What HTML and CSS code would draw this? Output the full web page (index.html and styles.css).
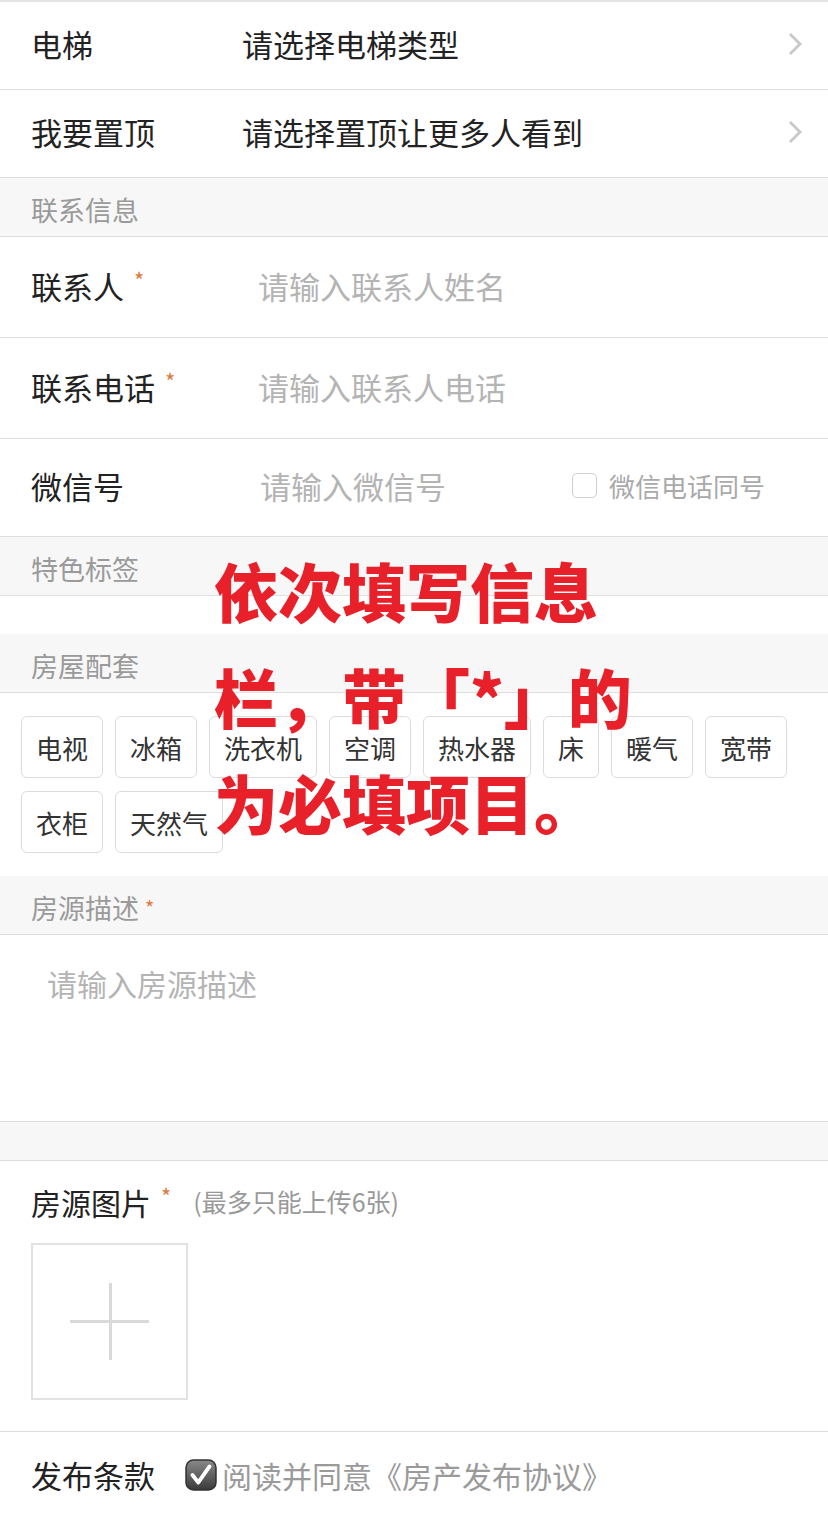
FILE: index.html
```html
<!DOCTYPE html>
<html lang="zh-CN">
<head>
  <meta charset="UTF-8" />
  <meta name="viewport" content="width=device-width, initial-scale=1.0" />
  <title>发布房源</title>
  <link rel="stylesheet" href="styles.css">
</head>
<body>
  <div class="page">
    <div class="form">
      <div class="row row-select">
        <span class="label">电梯</span>
        <span class="value">请选择电梯类型</span>
        <svg class="chevron" viewBox="0 0 14 24"><polyline points="2,2 12,12 2,22" /></svg>
      </div>
      <div class="row row-select">
        <span class="label">我要置顶</span>
        <span class="value">请选择置顶让更多人看到</span>
        <svg class="chevron" viewBox="0 0 14 24"><polyline points="2,2 12,12 2,22" /></svg>
      </div>

      <div class="section-title">联系信息</div>
      <div class="row row-input">
        <span class="label">联系人<i class="req">*</i></span>
        <span class="placeholder">请输入联系人姓名</span>
      </div>
      <div class="row row-input">
        <span class="label">联系电话<i class="req">*</i></span>
        <span class="placeholder">请输入联系人电话</span>
      </div>
      <div class="row row-input row-wechat">
        <span class="label">微信号</span>
        <span class="placeholder">请输入微信号</span>
        <span class="same-phone"><span class="check-box"></span>微信电话同号</span>
      </div>

      <div class="section-title">特色标签</div>
      <div class="tag-empty"></div>

      <div class="section-title">房屋配套</div>
      <div class="tags">
        <span class="tag">电视</span>
        <span class="tag">冰箱</span>
        <span class="tag">洗衣机</span>
        <span class="tag">空调</span>
        <span class="tag">热水器</span>
        <span class="tag">床</span>
        <span class="tag">暖气</span>
        <span class="tag">宽带</span>
        <span class="tag">衣柜</span>
        <span class="tag">天然气</span>
      </div>

      <div class="section-title">房源描述<i class="req">*</i></div>
      <div class="desc">请输入房源描述</div>
      <div class="gap"></div>

      <div class="photos">
        <div class="photos-head">
          <span class="photos-label">房源图片<i class="req">*</i></span>
          <span class="hint">(最多只能上传6张)</span>
        </div>
        <div class="upload"></div>
      </div>

      <div class="row terms">
        <span class="label">发布条款</span>
        <svg class="agree-box" viewBox="0 0 30 30">
          <defs>
            <linearGradient id="boxFill" x1="0" y1="0" x2="0" y2="1">
              <stop offset="0" stop-color="#8a8a8a" />
              <stop offset="1" stop-color="#3a3a3a" />
            </linearGradient>
          </defs>
          <rect x="1" y="1" width="28" height="28" rx="7" fill="url(#boxFill)" stroke="#333" stroke-width="1.5" />
          <polyline points="7,15 12.5,22 23,7" fill="none" stroke="#fff" stroke-width="3.6" stroke-linecap="round" stroke-linejoin="round" />
        </svg>
        <span class="agree-text">阅读并同意《房产发布协议》</span>
      </div>
    </div>

    <div class="tip">依次填写信息<br>栏，带「*」的<br>为必填项目。</div>
  </div>
</body>
</html>
```

FILE: styles.css
```css
* {
  box-sizing: border-box;
  margin: 0;
  padding: 0;
}

body {
  background: #fff;
  font-family: "Noto Sans CJK SC", "Noto Sans", sans-serif;
  color: #222;
}

.page {
  position: relative;
  width: 828px;
  min-height: 1522px;
  overflow: hidden;
}

.form {
  border-top: 2px solid #e4e4e4;
}

.row {
  display: flex;
  align-items: center;
  border-bottom: 1px solid #dedede;
  padding-left: 31px;
  padding-bottom: 4px;
  font-size: 31px;
}

.row-select {
  height: 88px;
}

.row-select .label {
  width: 211px;
}

.row-select .value {
  flex: 1;
}

.chevron {
  width: 14px;
  height: 24px;
  margin-right: 26px;
}

.chevron polyline {
  fill: none;
  stroke: #c8c8c8;
  stroke-width: 2.8;
}

.row-input {
  height: 101px;
}

.row-input .label {
  width: 227px;
}

.row-wechat {
  height: 98px;
}

.row-wechat .label {
  width: 229px;
}

.placeholder {
  flex: 1;
  color: #b4b4b4;
}

.req {
  font-style: normal;
  color: #e07a3c;
  font-size: 22px;
  vertical-align: 10px;
  margin-left: 10px;
}

.same-phone {
  display: flex;
  align-items: center;
  font-size: 26px;
  color: #aaa;
  margin-right: 63px;
}

.check-box {
  width: 25px;
  height: 25px;
  border: 1.5px solid #cfcfcf;
  border-radius: 5px;
  margin-right: 12px;
}

.section-title {
  height: 59px;
  display: flex;
  align-items: center;
  padding: 5px 0 0 31px;
  background: #f7f7f7;
  border-bottom: 1px solid #dedede;
  font-size: 27px;
  color: #9a9a9a;
}

.section-title .req {
  font-size: 20px;
  margin-left: 6px;
}

.tag-empty {
  height: 38px;
}

.tags {
  display: flex;
  flex-wrap: wrap;
  gap: 13px 12px;
  padding: 23px 21px 23px;
}

.tag {
  height: 62px;
  padding: 0 14px;
  display: flex;
  align-items: center;
  border: 1.5px solid #dcdcdc;
  border-radius: 6px;
  font-size: 26px;
  color: #333;
}

.desc {
  height: 187px;
  border-bottom: 1px solid #dedede;
  padding: 26px 47px;
  font-size: 30px;
  line-height: 44px;
  color: #b4b4b4;
}

.gap {
  height: 39px;
  background: #f7f7f7;
  border-bottom: 1px solid #dedede;
}

.photos {
  height: 271px;
  padding: 18px 31px 0;
  border-bottom: 1px solid #dedede;
}

.photos-head {
  display: flex;
  align-items: center;
  height: 44px;
}

.photos-label {
  font-size: 30px;
}

.hint {
  font-size: 25px;
  color: #999;
  margin-left: 22px;
}

.upload {
  position: relative;
  width: 157px;
  height: 157px;
  margin-top: 20px;
  border: 2px solid #e2e2e2;
}

.upload::before,
.upload::after {
  content: "";
  position: absolute;
  background: #dadada;
}

.upload::before {
  left: 37px;
  right: 37px;
  top: 75px;
  height: 3px;
}

.upload::after {
  top: 38px;
  bottom: 38px;
  left: 76px;
  width: 3px;
}

.terms {
  height: 91px;
  border-bottom: none;
  padding-bottom: 6px;
}

.terms .label {
  width: 154px;
}

.agree-box {
  width: 32px;
  height: 32px;
  margin-right: 5px;
}

.agree-text {
  color: #9a9a9a;
  font-size: 30px;
}

.tip {
  position: absolute;
  left: 214px;
  top: 536px;
  font-size: 64px;
  line-height: 106px;
  font-weight: 900;
  color: #e8202a;
}
```
